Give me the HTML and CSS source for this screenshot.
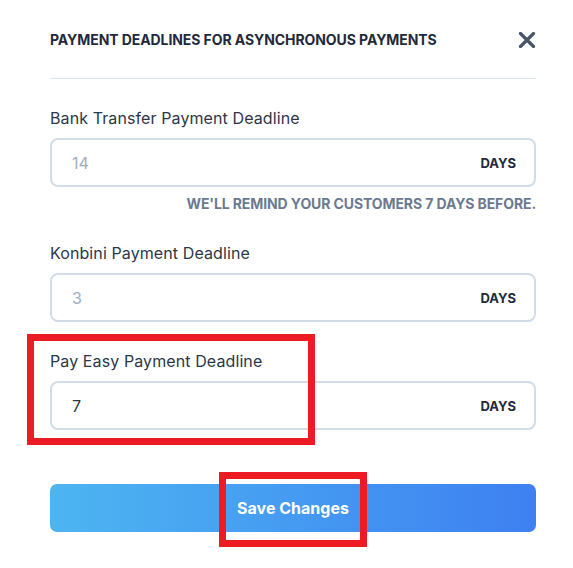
FILE: index.html
```html
<!DOCTYPE html>
<html lang="en">
<head>
    <meta charset="UTF-8">
    <meta name="viewport" content="width=device-width, initial-scale=1.0">
    <title>Payment Deadlines</title>
    <link rel="stylesheet" href="styles.css">
</head>
<body>
<div class="modal">
    <header class="modal-header">
        <h2>Payment deadlines for asynchronous payments</h2>
        <button class="close" aria-label="Close">
            <svg width="18" height="16" viewBox="0 0 18 16">
                <path d="M2.5 1.5 L15.5 14.5 M15.5 1.5 L2.5 14.5" stroke="#4a5568" stroke-width="3.2" stroke-linecap="round"/>
            </svg>
        </button>
    </header>

    <div class="field">
        <label for="bank">Bank Transfer Payment Deadline</label>
        <div class="input-box">
            <input id="bank" class="muted" value="14">
            <span class="unit">Days</span>
        </div>
        <p class="hint">We'll remind your customers 7 days before.</p>
    </div>

    <div class="field">
        <label for="konbini">Konbini Payment Deadline</label>
        <div class="input-box">
            <input id="konbini" class="muted" value="3">
            <span class="unit">Days</span>
        </div>
    </div>

    <div class="field">
        <label for="payeasy">Pay Easy Payment Deadline</label>
        <div class="input-box">
            <input id="payeasy" value="7">
            <span class="unit">Days</span>
        </div>
    </div>

    <button class="save">Save Changes</button>
</div>

<div class="highlight highlight-field"></div>
<div class="highlight highlight-save"></div>
</body>
</html>
```

FILE: styles.css
```css
body {
    margin: 0;
    background-color: #fff;
    font-family: 'Inter', 'Liberation Sans', sans-serif;
    color: #2d3748;
}

.modal {
    width: 486px;
    padding: 0 37px 0 50px;
}

.modal-header {
    display: flex;
    justify-content: space-between;
    align-items: center;
    padding: 30px 0 28px;
    border-bottom: 1px solid #dde6f0;
}

.modal-header h2 {
    margin: 0;
    font-size: 14px;
    line-height: 20px;
    font-weight: 700;
    text-transform: uppercase;
    color: #1f2a3c;
    letter-spacing: -0.08px;
}

.close {
    display: flex;
    padding: 0;
    border: none;
    background: none;
    cursor: pointer;
}

.field {
    margin-top: 29px;
}

.field label {
    display: block;
    font-size: 16px;
    line-height: 20px;
    margin-bottom: 10px;
    color: #2d3748;
    letter-spacing: 0.1px;
}

.input-box {
    display: flex;
    align-items: center;
    height: 49px;
    box-sizing: border-box;
    border: 2px solid #d2dce8;
    border-radius: 8px;
    padding: 0 18px 0 20px;
}

.input-box input {
    flex: 1;
    border: none;
    outline: none;
    padding: 0;
    font-family: inherit;
    font-size: 16px;
    color: #2d3748;
    background: none;
}

.input-box input.muted {
    color: #a0aec0;
}

.unit {
    font-size: 13px;
    font-weight: 700;
    text-transform: uppercase;
    color: #1f2a3c;
}

.hint {
    margin: 7px 0 0;
    text-align: right;
    font-size: 14px;
    line-height: 20px;
    font-weight: 700;
    text-transform: uppercase;
    color: #6b7a90;
    letter-spacing: -0.1px;
}

.save {
    display: block;
    width: 100%;
    height: 48px;
    margin-top: 54px;
    border: none;
    border-radius: 7px;
    background: linear-gradient(to right, #4db5f1, #3e80f1);
    color: #fff;
    font-family: inherit;
    font-size: 16px;
    font-weight: 700;
    cursor: pointer;
}

/* annotation boxes drawn over the screenshot */
.highlight {
    position: absolute;
    border: 7px solid #ed1c24;
    box-sizing: border-box;
    pointer-events: none;
}

.highlight-field {
    left: 27px;
    top: 334px;
    width: 288px;
    height: 111px;
}

.highlight-save {
    left: 219px;
    top: 472px;
    width: 148px;
    height: 75px;
}
```
